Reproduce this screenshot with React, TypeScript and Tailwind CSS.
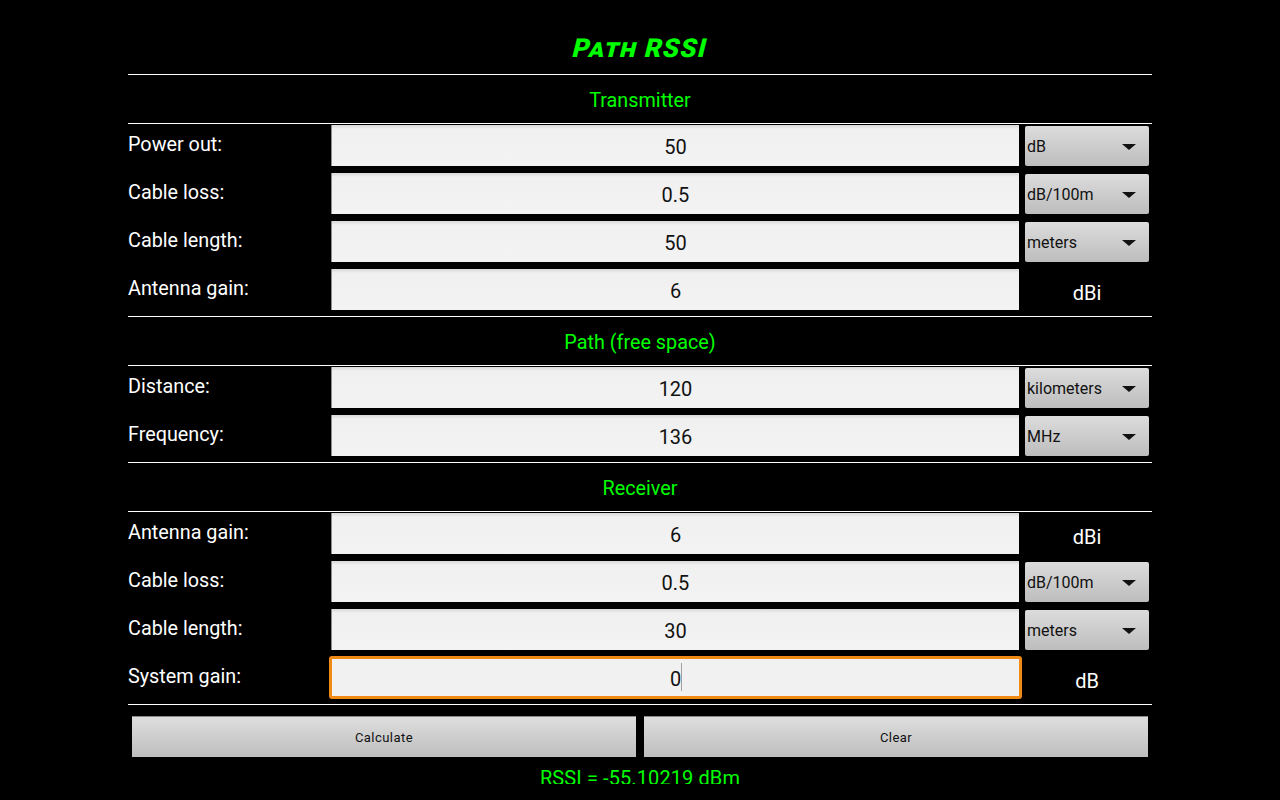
const rowsTx = [
  { label: "Power out:", value: "50", unit: "dB", select: true },
  { label: "Cable loss:", value: "0.5", unit: "dB/100m", select: true },
  { label: "Cable length:", value: "50", unit: "meters", select: true },
  { label: "Antenna gain:", value: "6", unit: "dBi", select: false },
];
const rowsPath = [
  { label: "Distance:", value: "120", unit: "kilometers", select: true },
  { label: "Frequency:", value: "136", unit: "MHz", select: true },
];
const rowsRx = [
  { label: "Antenna gain:", value: "6", unit: "dBi", select: false },
  { label: "Cable loss:", value: "0.5", unit: "dB/100m", select: true },
  { label: "Cable length:", value: "30", unit: "meters", select: true },
  { label: "System gain:", value: "0", unit: "dB", select: false, focused: true },
];

type RowData = { label: string; value: string; unit: string; select: boolean; focused?: boolean };

function Line() {
  return <div className="h-px bg-white" />;
}

function Heading({ children }: { children: string }) {
  return (
    <div className="flex h-[48px] items-center justify-center pt-[4px] text-[19.8px] text-[#00ff00]">
      {children}
    </div>
  );
}

function Row({ row }: { row: RowData }) {
  return (
    <div className="flex h-[48px] items-start">
      <div className="w-[203px] pt-[7px] text-[19.8px] leading-[28px] text-white">{row.label}</div>
      {row.focused ? (
        <div className="mr-[3px] ml-[-2px] box-border flex h-[43px] w-[693px] items-center justify-center rounded-[3px] border-[3px] border-[#f08a14] bg-[#f1f1f1] pt-[3px] text-[20px] text-[#111]">
          <span className="relative">
            {row.value}
            <span className="absolute top-[-1px] right-[-1px] h-[28px] w-px bg-[#a0a0a0]" />
          </span>
        </div>
      ) : (
        <div className="mt-[1px] mr-[6px] flex h-[41px] w-[688px] items-center justify-center border-l border-[#8c8c8c] bg-gradient-to-b from-[#d8d8d8] from-0% via-[#f0f0f0] via-[10%] to-[#f3f3f3] pt-[3px] text-[20px] text-[#111]">
          {row.value}
        </div>
      )}
      {row.select ? (
        <div className="mt-[2px] flex h-[40px] w-[124px] items-center justify-between rounded-[2px] bg-gradient-to-b from-[#dcdcdc] to-[#bdbdbd] pt-[1px] pr-[13px] pl-[2px] text-[16px] text-[#111]">
          <span>{row.unit}</span>
          <svg width="14" height="6" viewBox="0 0 14 6">
            <path d="M0 0H14L7 6Z" fill="#111" />
          </svg>
        </div>
      ) : (
        <div className="flex h-[49px] w-[124px] items-center justify-center pt-[1px] text-[20px] text-white">
          {row.unit}
        </div>
      )}
    </div>
  );
}

export default function App() {
  return (
    <div
      className="h-[800px] w-[1280px] overflow-hidden bg-black"
      style={{ fontFamily: "Roboto, sans-serif" }}
    >
      <div className="mx-auto w-[1024px]">
        <div className="flex h-[74px] items-center justify-center pt-[22px]">
          <span className="origin-center -skew-x-[14deg] text-[26px] font-black tracking-[1.2px] text-[#00ff00] [font-variant:small-caps]">
            Path RSSI
          </span>
        </div>
        <Line />
        <Heading>Transmitter</Heading>
        <Line />
        {rowsTx.map((r) => (
          <Row key={r.label} row={r} />
        ))}
        <Line />
        <Heading>Path (free space)</Heading>
        <Line />
        {rowsPath.map((r) => (
          <Row key={r.label} row={r} />
        ))}
        <Line />
        <Heading>Receiver</Heading>
        <Line />
        {rowsRx.map((r) => (
          <Row key={r.label} row={r} />
        ))}
        <Line />
        <div className="flex gap-[8px] px-[4px] pt-[11px]">
          <button className="h-[41px] flex-1 border-t border-[#8a8a8a] bg-gradient-to-b from-[#dedede] to-[#bebebe] pt-[1px] text-[13px] tracking-[0.45px] text-[#111]">
            Calculate
          </button>
          <button className="h-[41px] flex-1 border-t border-[#8a8a8a] bg-gradient-to-b from-[#dedede] to-[#bebebe] pt-[1px] text-[13px] tracking-[0.45px] text-[#111]">
            Clear
          </button>
        </div>
        <div className="h-[27px] overflow-hidden pt-[7px] text-center text-[20px] leading-[28px] tracking-[0.1px] text-[#00ff00]">
          RSSI = -55.10219 dBm
        </div>
      </div>
    </div>
  );
}
